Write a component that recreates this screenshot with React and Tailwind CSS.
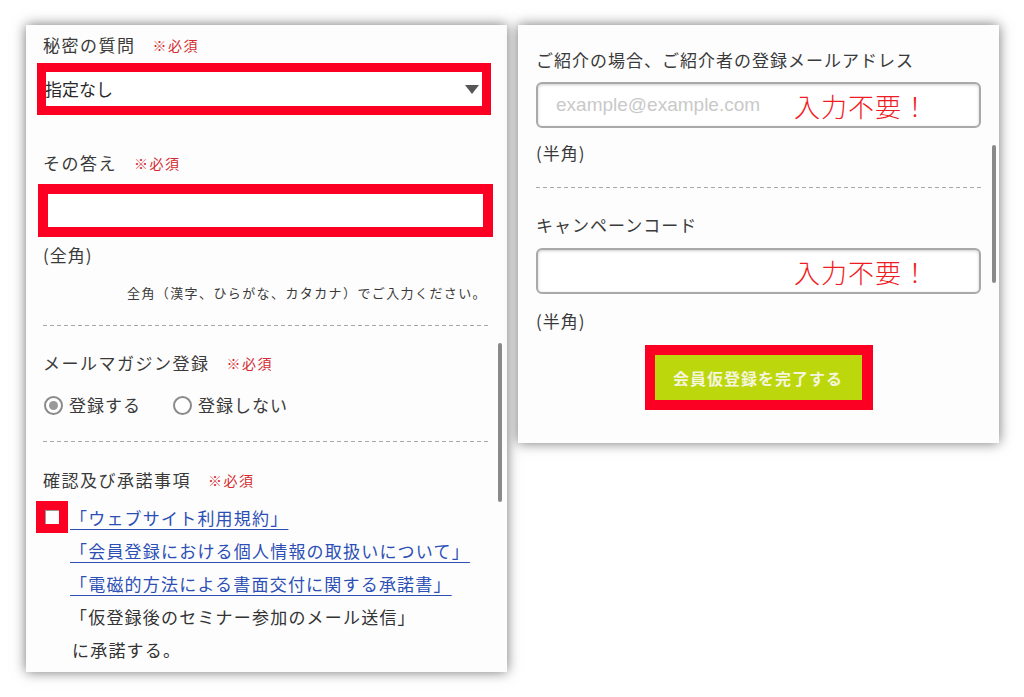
import React from "react";

const jp = { fontFamily: '"Noto Sans CJK JP", "Noto Sans", sans-serif' };

const Req = () => (
    <span className="ml-[17px] text-[14px] tracking-[1.5px] text-[#d42a30]">※必須</span>
);

const Label = ({ children, required = true, className = "" }) => (
    <div className={"flex h-[20px] items-center text-[17px] tracking-[1.5px] text-[#3a3a3a] " + className}>
        <span>{children}</span>
        {required && <Req />}
    </div>
);

const Dashed = ({ className = "" }) => (
    <div className={"h-px bg-[repeating-linear-gradient(90deg,#a8a8a8_0_4px,transparent_4px_7px)] " + className} />
);

const Radio = ({ checked, label }) => (
    <div className="flex items-center">
        <span className="flex h-[19px] w-[19px] items-center justify-center rounded-full border-2 border-[#8a8a8a] bg-white">
            {checked && <span className="h-[9px] w-[9px] rounded-full bg-[#9a9a9a]" />}
        </span>
        <span className="ml-[6px] text-[17px] tracking-[1px] text-[#3a3a3a]">{label}</span>
    </div>
);

const TextField = ({ placeholder, className = "" }) => (
    <div className={"relative flex h-[46px] w-[445px] items-center rounded-[6px] border-2 border-[#a9a9a9] bg-white shadow-[inset_0_1px_3px_rgba(0,0,0,0.2)] " + className}>
        {placeholder && (
            <span
                className="ml-[18px] text-[19px] text-[#c9c9c9]"
                style={{ fontFamily: '"Liberation Sans", Arial, sans-serif' }}
            >
                {placeholder}
            </span>
        )}
        <span className="absolute left-[256px] top-1/2 -translate-y-1/2 text-[26px] font-light tracking-[1px] text-[#f01c24]">
            入力不要！
        </span>
    </div>
);

const Link = ({ children }) => (
    <a className="text-[17px] tracking-[1.2px] text-[#2c4fb6] underline decoration-1 underline-offset-[4px]">
        {children}
    </a>
);

export default function App() {
    return (
        <div className="flex h-[697px] w-[1024px] items-start bg-white" style={jp}>
            {/* left panel */}
            <div className="relative ml-[26px] mt-[25px] h-[647px] w-[481px] overflow-hidden bg-[#fdfdfd] shadow-[0_0_12px_rgba(0,0,0,0.55)]">
                <Label className="ml-[17px] mt-[10px]">秘密の質問</Label>

                <div className="ml-[11px] mt-[8px] flex h-[52px] w-[454px] items-center justify-between border-[9px] border-[#fc0024] bg-white pr-[3px]">
                    <span className="-ml-[1px] text-[17px] text-[#2a2a2a]">指定なし</span>
                    <span className="h-0 w-0 border-x-[7px] border-t-[9px] border-x-transparent border-t-[#555]" />
                </div>

                <Label className="ml-[17px] mt-[38px]">その答え</Label>

                <div className="ml-[12px] mt-[11px] h-[53px] w-[455px] border-[10px] border-[#fc0024] bg-white" />

                <div className="ml-[17px] mt-[8px] h-[20px] text-[17px] leading-[20px] tracking-[1px] text-[#3a3a3a]">(全角)</div>

                <div className="mr-[20px] mt-[18px] h-[20px] text-right text-[13px] leading-[20px] tracking-[1.4px] text-[#3a3a3a]">
                    全角（漢字、ひらがな、カタカナ）でご入力ください。
                </div>

                <Dashed className="ml-[17px] mr-[19px] mt-[22px]" />

                <Label className="ml-[17px] mt-[27px]">メールマガジン登録</Label>

                <div className="ml-[18px] mt-[20px] flex h-[24px] items-center gap-[32px]">
                    <Radio checked label="登録する" />
                    <Radio label="登録しない" />
                </div>

                <Dashed className="ml-[17px] mr-[19px] mt-[24px]" />

                <Label className="ml-[17px] mt-[28px]">確認及び承諾事項</Label>

                <div className="relative mt-[11px] pl-[44px]">
                    <span className="absolute left-[10px] top-0 flex h-[32px] w-[32px] items-center justify-center bg-[#fc0024]">
                        <span className="h-[14px] w-[14px] border-t border-l border-[#999] bg-white" />
                    </span>
                    <div className="flex h-[33px] items-center"><Link>「ウェブサイト利用規約」</Link></div>
                    <div className="flex h-[33px] items-center"><Link>「会員登録における個人情報の取扱いについて」</Link></div>
                    <div className="flex h-[33px] items-center"><Link>「電磁的方法による書面交付に関する承諾書」</Link></div>
                    <div className="flex h-[33px] items-center text-[17px] tracking-[1.2px] text-[#333]">「仮登録後のセミナー参加のメール送信」</div>
                    <div className="flex h-[33px] items-center pl-[2px] text-[17px] tracking-[1.2px] text-[#333]">に承諾する。</div>
                </div>

                {/* scrollbar */}
                <div className="absolute left-[472px] top-[318px] h-[159px] w-[4px] rounded-full bg-[#8a8a8a]" />
            </div>

            {/* right panel */}
            <div className="relative ml-[11px] mt-[25px] h-[418px] w-[481px] bg-[#fdfdfd] pl-[18px] shadow-[0_0_12px_rgba(0,0,0,0.55)]">
                <Label required={false} className="mt-[25px] tracking-[1px]">ご紹介の場合、ご紹介者の登録メールアドレス</Label>

                <TextField placeholder="example@example.com" className="mt-[12px]" />

                <div className="mt-[15px] h-[20px] text-[17px] leading-[20px] tracking-[1px] text-[#3a3a3a]">(半角)</div>

                <Dashed className="mr-[18px] mt-[24px]" />

                <Label required={false} className="mt-[27px] tracking-[1px]">キャンペーンコード</Label>

                <TextField className="mt-[13px] h-[45px]" />

                <div className="mt-[17px] h-[20px] text-[17px] leading-[20px] tracking-[1px] text-[#3a3a3a]">(半角)</div>

                <div className="-ml-[18px] mt-[14px] flex justify-center">
                    <button className="flex h-[65px] w-[228px] items-center justify-center border-[10px] border-r-[11px] border-[#fc0024] bg-[#bcd80c] text-[16px] font-bold tracking-[1px] text-[#f4f5dc]">
                        会員仮登録を完了する
                    </button>
                </div>

                {/* scrollbar */}
                <div className="absolute left-[474px] top-[120px] h-[138px] w-[4px] rounded-full bg-[#8a8a8a]" />
            </div>
        </div>
    );
}
